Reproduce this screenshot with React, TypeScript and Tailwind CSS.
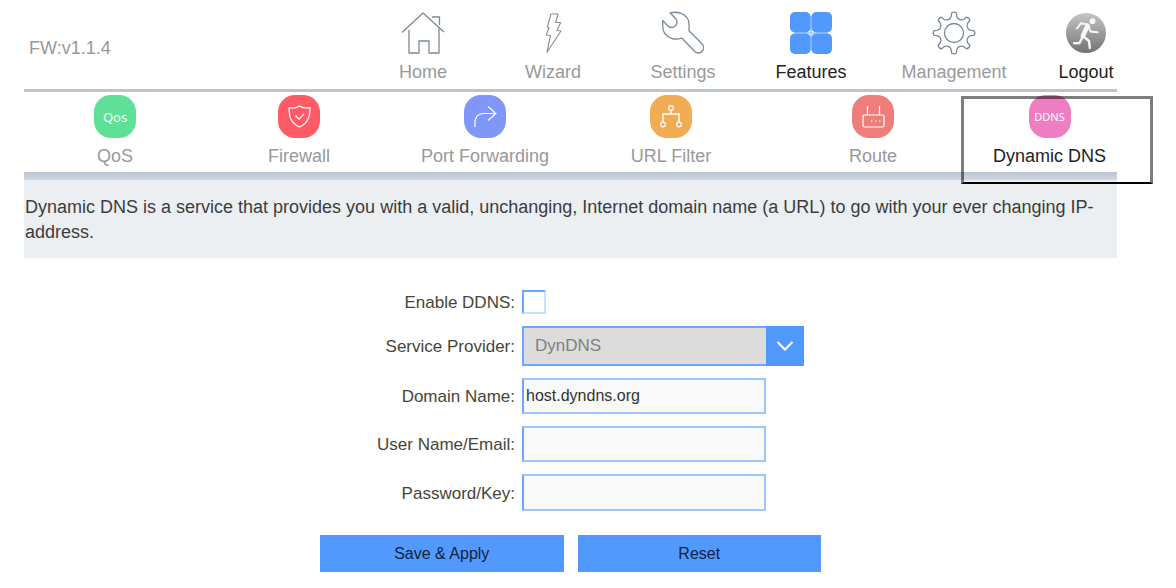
import { useState } from 'react';
import type { ReactNode } from 'react';
import clsx from 'clsx';

interface NavItem {
  label: string;
  icon: ReactNode;
}

// eight-toothed cog on a 42x42 grid
function cogPath() {
  const pt = (r: number, deg: number) => {
    const a = (deg * Math.PI) / 180;
    return `${(21 + r * Math.sin(a)).toFixed(1)} ${(21 - r * Math.cos(a)).toFixed(1)}`;
  };
  let d = `M${pt(17, -9)}`;
  for (let i = 0; i < 8; i++) {
    const a = i * 45;
    d += ` L${pt(20, a - 7)} Q${pt(21.8, a)} ${pt(20, a + 7)} L${pt(17, a + 9)}`;
    d += ` C${pt(14, a + 15)} ${pt(14, a + 30)} ${pt(17, a + 36)}`;
  }
  return `${d} Z`;
}

function LineIcon({ children }: { children: ReactNode }) {
  return (
    <svg
      viewBox="0 0 42 42"
      className="size-[42px] overflow-visible"
      fill="none"
      stroke="#7b8a97"
      strokeWidth="1.3"
      strokeLinejoin="round"
      aria-hidden="true"
    >
      {children}
    </svg>
  );
}

function Tile({ className, children }: { className: string; children: ReactNode }) {
  return (
    <span className={clsx('flex h-[43px] w-[42px] items-center justify-center rounded-[17px] text-white', className)}>
      {children}
    </span>
  );
}

function TileIcon({ children }: { children: ReactNode }) {
  return (
    <svg viewBox="0 0 42 43" className="h-[43px] w-[42px]" fill="none" stroke="currentColor" strokeWidth="1.2" aria-hidden="true">
      {children}
    </svg>
  );
}

const MAIN_NAV: NavItem[] = [
  {
    label: 'Home',
    icon: (
      <LineIcon>
        <path d="M0 20.5 21 1 42 20M30 5h7.5v8" />
        <path d="M7 18v23h10V29h10v12h10V16" />
      </LineIcon>
    ),
  },
  {
    label: 'Wizard',
    icon: (
      <LineIcon>
        <path
          d="M19 2H26l-2.3 8.5h5l-3.700 8 4 .5L15 40.300l3.500-16.800-4.200-.5 2.700-7.500-1.800-.2z"
          stroke="#8c8c8c"
          strokeWidth="1.1"
        />
      </LineIcon>
    ),
  },
  {
    label: 'Settings',
    icon: (
      <LineIcon>
        <path d="M8 .8C12 0 17 0 20.5 2c4.500 2.500 6.500 6 6.500 10v6.800l13 13c2 2.200 2 5.500.2 7.500-2 2.200-5.400 2.200-7.200.4L19.800 26c-3.300 1.400-7 1.500-10.300.3C3.500 24 .5 19.500.7 14V8.500l5 5.300c2 2.200 5.300 2.200 7.300.4 2.200-2 2.500-4.700 1.200-7z" />
      </LineIcon>
    ),
  },
  {
    label: 'Features',
    icon: (
      <svg viewBox="0 0 42 42" className="size-[42px]" fill="#5299fd" aria-hidden="true">
        <path d="M21 4v34M4 21h34" stroke="#a3c8fe" strokeWidth="1.5" />
        <rect width="20.6" height="20.5" rx="5" />
        <rect x="21.4" width="20.6" height="20.5" rx="5" />
        <rect y="21.4" width="20.6" height="20.6" rx="5" />
        <rect x="21.4" y="21.4" width="20.6" height="20.6" rx="5" />
      </svg>
    ),
  },
  {
    label: 'Management',
    icon: (
      <LineIcon>
        <path d={cogPath()} />
        <circle cx="21" cy="21" r="9.5" />
      </LineIcon>
    ),
  },
  {
    label: 'Logout',
    icon: (
      <svg viewBox="0 0 42 42" className="size-[42px]" fill="none" aria-hidden="true">
        <defs>
          <linearGradient id="logout-disc" x1="0" y1="0" x2="0" y2="1">
            <stop offset="0" stopColor="#c6c6c6" />
            <stop offset="1" stopColor="#727272" />
          </linearGradient>
        </defs>
        <circle cx="21" cy="21" r="20" fill="url(#logout-disc)" />
        <g stroke="#f7f7f7" strokeLinecap="round" strokeLinejoin="round">
          <path d="m12 16.5 4-5.3 7 1.3 2.5 7 7 .8" strokeWidth="2" />
          <path d="m22.5 14-4.7 10" strokeWidth="4.5" />
          <path d="m18.5 24.5 5.5 4.5.8 7M17.5 25l-3 6-5.5.3" strokeWidth="2.4" />
        </g>
        <circle cx="27.5" cy="9.3" r="3" fill="#f7f7f7" />
      </svg>
    ),
  },
];

const FEATURE_NAV: NavItem[] = [
  {
    label: 'QoS',
    icon: <Tile className="bg-[#5ee197] font-['Noto_Sans',sans-serif] text-[13px]">Qos</Tile>,
  },
  {
    label: 'Firewall',
    icon: (
      <Tile className="bg-[#ff5b66]">
        <TileIcon>
          <path d="M21.5 11c-3 2-7 2.5-10.5 1.7C11 21 12.5 28 21.5 32 30.5 28 32 21 32 12.7 28.5 13.5 24.5 13 21.5 11z" />
          <path d="m17.5 20.5 3.5 3.7 5-5.4" />
        </TileIcon>
      </Tile>
    ),
  },
  {
    label: 'Port Forwarding',
    icon: (
      <Tile className="bg-[#8097f8]">
        <TileIcon>
          <path d="M11 32c-.8-9 2-13.5 9-13.5h11.5M24 11.5l8 7-8 7" />
        </TileIcon>
      </Tile>
    ),
  },
  {
    label: 'URL Filter',
    icon: (
      <Tile className="bg-[#f1ad54]">
        <TileIcon>
          <circle cx="21" cy="13" r="2.3" />
          <path d="M21 15.5V19M13 27v-8h16v8" strokeWidth="1.5" />
          <circle cx="13" cy="29.5" r="2.3" />
          <circle cx="29" cy="29.5" r="2.3" />
        </TileIcon>
      </Tile>
    ),
  },
  {
    label: 'Route',
    icon: (
      <Tile className="bg-[#ef7d7c]">
        <TileIcon>
          <rect x="11" y="20" width="21" height="12" rx="1.5" />
          <path d="M15.5 11v9M27.5 11v9" />
          <path d="M19 26h1.5M23 26h1.5M27 26h1.5" />
        </TileIcon>
      </Tile>
    ),
  },
  {
    label: 'Dynamic DNS',
    icon: <Tile className="bg-[#ef7dc1] font-['Noto_Sans',sans-serif] text-[11px]">DDNS</Tile>,
  },
];

const INPUT = 'block w-[244px] border-2 border-[#9cc6ff] border-l-[#6ba8fd] bg-[#f9f9f9] px-[2px] text-base text-[#333] outline-none';

function Field({ id, label, children }: { id: string; label: string; children: ReactNode }) {
  return (
    <div className="grid grid-cols-[195px_1fr] items-center gap-[7px]">
      <label htmlFor={id} className="pt-0.5 text-right text-[17px] leading-[22px] text-[#44463a]">
        {label}
      </label>
      <div>{children}</div>
    </div>
  );
}

export default function App() {
  const [form, setForm] = useState({
    enabled: false,
    provider: 'DynDNS',
    domain: 'host.dyndns.org',
    user: '',
    password: '',
  });

  const handle = (k: string, v: unknown) => setForm((f) => ({ ...f, [k]: v }));

  return (
    <div className="min-h-screen bg-white pr-[59px] pl-6 font-['Liberation_Sans',Arial,sans-serif]">
      <header className="border-b-[3px] border-[#b9c5cf] pt-3 pb-[5px]">
        <div className="-mr-[21px] grid grid-cols-[334fr_780fr] items-center">
          <p className="pl-[5px] text-lg leading-6 text-[#999]">FW:v1.1.4</p>
          <nav className="grid grid-cols-[130fr_130fr_130fr_126fr_160fr_104fr]">
            {MAIN_NAV.map((item) => (
              <a
                key={item.label}
                href="#"
                className={clsx(
                  'flex flex-col items-center gap-[6px] text-lg leading-6',
                  item.label === 'Features' || item.label === 'Logout' ? 'text-[#222]' : 'text-[#999]'
                )}
              >
                {item.icon}
                {item.label}
              </a>
            ))}
          </nav>
        </div>
      </header>

      <nav className="grid grid-cols-[182fr_186fr_186fr_186fr_218fr_135fr] pt-[3px] pb-1">
        {FEATURE_NAV.map((item) => {
          const active = item.label === 'Dynamic DNS';
          return (
            <a
              key={item.label}
              href="#"
              className={clsx(
                'relative flex flex-col items-center gap-[6px] text-lg leading-6 whitespace-nowrap',
                active ? 'text-[#222]' : 'text-[#999]'
              )}
            >
              {item.icon}
              {item.label}
              {active && (
                <span className="absolute top-px -right-9 -bottom-4 -left-[21px] border-[3px] border-b-2 border-black/50 border-b-black" />
              )}
            </a>
          );
        })}
      </nav>

      <div className="h-2 bg-linear-to-b from-[#b9c4cf] to-[#d0d9e1]" />
      <p className="bg-[#ebeff2] px-px pt-[15px] pb-[13px] text-lg leading-[25px] text-[#3c3c3c]">
        Dynamic DNS is a service that provides you with a valid, unchanging, Internet domain name (a URL) to go with
        your ever changing IP-address.
      </p>

      <form className="mx-auto flex max-w-[501px] flex-col gap-3 pt-8" onSubmit={(e) => e.preventDefault()}>
        <Field id="enabled" label="Enable DDNS:">
          <input
            id="enabled"
            type="checkbox"
            checked={form.enabled}
            onChange={(e) => handle('enabled', e.target.checked)}
            className="block size-6 appearance-none border-2 border-[#6ba8fd] border-r-[#c9e0ff] border-b-[#c9e0ff] bg-white checked:bg-[#5299fd]"
          />
        </Field>
        <Field id="provider" label="Service Provider:">
          <div className="relative w-[282px]">
            <select
              id="provider"
              value={form.provider}
              onChange={(e) => handle('provider', e.target.value)}
              className="block h-10 w-full appearance-none border-2 border-[#6ba8fd] bg-[#dcdcdc] pl-[11px] text-[17px] text-[#808080] outline-none"
            >
              <option>DynDNS</option>
            </select>
            <span className="pointer-events-none absolute inset-y-0 right-0 flex w-[38px] items-center justify-center bg-[#5299fd]">
              <svg viewBox="0 0 18 12" className="h-3 w-[18px]" fill="none" stroke="#fff" strokeWidth="2" aria-hidden="true">
                <path d="m1.5 2 7.5 7.5L16.5 2" />
              </svg>
            </span>
          </div>
        </Field>
        <Field id="domain" label="Domain Name:">
          <input
            id="domain"
            type="text"
            value={form.domain}
            onChange={(e) => handle('domain', e.target.value)}
            className={clsx(INPUT, 'h-9')}
          />
        </Field>
        <Field id="user" label="User Name/Email:">
          <input
            id="user"
            type="text"
            value={form.user}
            onChange={(e) => handle('user', e.target.value)}
            className={clsx(INPUT, 'h-9')}
          />
        </Field>
        <Field id="password" label="Password/Key:">
          <input
            id="password"
            type="password"
            value={form.password}
            onChange={(e) => handle('password', e.target.value)}
            className={clsx(INPUT, 'h-[37px]')}
          />
        </Field>
        <div className="grid grid-cols-2 gap-[14px] pt-3">
          <button type="submit" className="h-[37px] bg-[#5299fd] text-base text-[#14233a]">
            Save &amp; Apply
          </button>
          <button type="reset" className="h-[37px] bg-[#5299fd] text-base text-[#14233a]">
            Reset
          </button>
        </div>
      </form>
    </div>
  );
}
